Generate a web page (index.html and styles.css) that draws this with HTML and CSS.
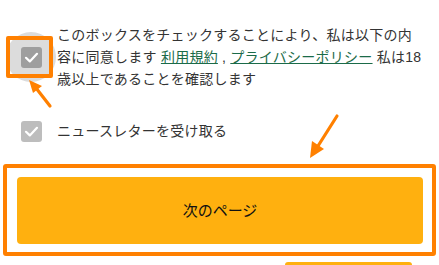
FILE: index.html
```html
<!DOCTYPE html>
<html lang="ja">
<head>
<meta charset="utf-8">
<link rel="stylesheet" href="styles.css">
</head>
<body>
<div class="page">
  <div class="row consent">
    <div class="box-slot">
      <span class="ripple"></span>
      <span class="check dark">
        <svg viewBox="0 0 21 21" width="21" height="21"><path d="M5 10.8 L8.8 14.4 L16 6.8" fill="none" stroke="#fff" stroke-width="2.2" stroke-linecap="round" stroke-linejoin="round"/></svg>
      </span>
      <span class="mark-box"></span>
    </div>
    <p class="text"><span>このボックスをチェックすることにより、私は以下の内容に同意します </span><a href="#">利用規約</a><span> , </span><a href="#">プライバシーポリシー</a><span> 私は18歳以上であることを確認します</span></p>
  </div>
  <div class="row news">
    <div class="box-slot">
      <span class="check light">
        <svg viewBox="0 0 21 21" width="21" height="21"><path d="M5 10.8 L8.8 14.4 L16 6.8" fill="none" stroke="#fff" stroke-width="2.2" stroke-linecap="round" stroke-linejoin="round"/></svg>
      </span>
    </div>
    <p class="text">ニュースレターを受け取る</p>
  </div>
  <div class="highlight">
    <button class="next">次のページ</button>
  </div>
  <div class="pill"></div>

  <svg class="arrows" width="439" height="265" viewBox="0 0 439 265">
    <line x1="50" y1="106" x2="36" y2="88" stroke="#ff8000" stroke-width="3.2" stroke-linecap="round"/>
    <polygon points="29,80 42,86 33,93" fill="#ff8000"/>
    <line x1="337" y1="116" x2="318" y2="146" stroke="#ff8000" stroke-width="3.2" stroke-linecap="round"/>
    <polygon points="310,158 312,141 324,149" fill="#ff8000"/>
  </svg>
</div>
</body>
</html>
```

FILE: styles.css
```css
* { box-sizing: border-box; }
html, body { margin: 0; padding: 0; background: #fff; }
body {
  width: 439px;
  height: 265px;
  overflow: hidden;
  font-family: "Liberation Sans", "Noto Sans CJK JP", sans-serif;
  font-size: 14px;
  color: #333;
}
.page { position: relative; width: 439px; height: 265px; overflow: hidden; }
.row { display: flex; align-items: center; }
.consent { padding-top: 24px; }
.news { margin-top: 30px; }
.box-slot {
  position: relative;
  width: 57px;
  flex: none;
  display: flex;
  align-items: center;
  padding-left: 21px;
}
.text { margin: 0; line-height: 22px; width: 368px; letter-spacing: 0.25px; }
.check {
  position: relative;
  display: block;
  width: 21px;
  height: 21px;
  border-radius: 3px;
}
.check svg { display: block; }
.check.dark { background: #9e9e9e; }
.check.light { background: #bdbdbd; }
.ripple {
  position: absolute;
  left: 6px;
  top: 50%;
  width: 50px;
  height: 50px;
  margin-top: -25px;
  border-radius: 50%;
  background: #dcdcdc;
}
.mark-box {
  position: absolute;
  left: 6px;
  top: 50%;
  width: 47px;
  height: 42px;
  margin-top: -21px;
  border: 4px solid #ff8000;
  border-radius: 2px;
}
a { color: #1b6b49; text-decoration: underline; }
.highlight {
  margin: 22px 0 0 3px;
  width: 433px;
  border: 4px solid #ff8000;
  border-radius: 3px;
  padding: 9px 9px 8px 10px;
}
.next {
  display: block;
  width: 100%;
  height: 67px;
  border: 0;
  border-radius: 4px;
  background: #ffb00f;
  font-family: "Liberation Sans", "Noto Sans CJK JP", sans-serif;
  font-size: 15px;
  color: #111;
  padding-bottom: 3px;
}
.pill {
  margin: 6px 0 0 285px;
  width: 127px;
  height: 3px;
  border-radius: 12px 12px 0 0;
  background: #ffb00f;
}
.arrows { position: absolute; left: 0; top: 0; pointer-events: none; }
```
